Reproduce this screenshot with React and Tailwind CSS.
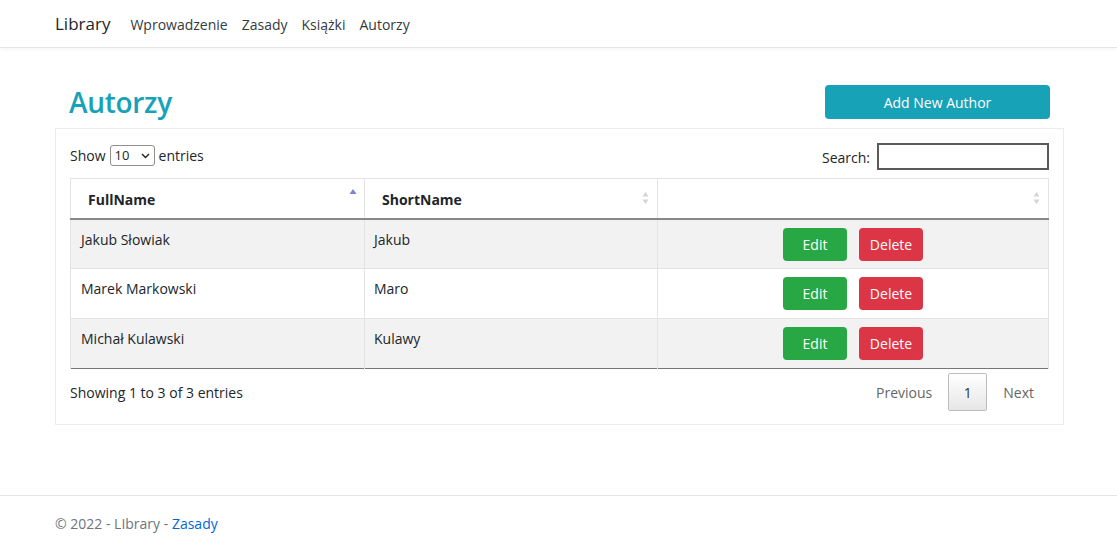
const authors = [
  { full: "Jakub Słowiak", short: "Jakub" },
  { full: "Marek Markowski", short: "Maro" },
  { full: "Michał Kulawski", short: "Kulawy" },
];

function SortBoth() {
  return (
    <svg width="7" height="14" viewBox="0 0 7 14" className="shrink-0">
      <path d="M3.5 1 L6.5 5.5 H0.5 Z" fill="#d4d4d4" />
      <path d="M3.5 13 L6.5 8.5 H0.5 Z" fill="#d4d4d4" />
    </svg>
  );
}

function SortUp() {
  return (
    <svg width="8" height="14" viewBox="0 0 8 14" className="shrink-0">
      <path d="M4 1 L7.5 6 H0.5 Z" fill="#7a82dc" />
    </svg>
  );
}

export default function App() {
  return (
    <div className="h-[543px] overflow-hidden flex flex-col bg-white text-[#212529] font-['Open_Sans','Noto_Sans',sans-serif] text-[14px]">
      <nav className="h-12 shrink-0 flex items-center px-[55px] border-b border-[#e5e5e5] shadow-[0_1px_4px_rgba(0,0,0,0.05)]">
        <span className="text-[17px] text-[#212529] mr-[20px] mt-[1px]">Library</span>
        <div className="flex gap-[14px] text-[14px] text-[#343a40] mt-[1px]">
          <span>Wprowadzenie</span>
          <span>Zasady</span>
          <span>Książki</span>
          <span>Autorzy</span>
        </div>
      </nav>

      <main className="flex-1 px-[55px] pt-[37px]">
        <div className="w-[1009px]">
          <div className="flex items-center justify-between pl-[14px] pr-[14px]">
            <h1 className="text-[28px] leading-[34px] font-semibold text-[#17a2b8] tracking-[-0.3px]">Autorzy</h1>
            <button className="w-[225px] h-[34px] rounded bg-[#17a2b8] text-white text-[14px]">
              Add New Author
            </button>
          </div>

          <div className="mt-[9px] border border-[#ececec] px-[14px] pt-[14px] pb-[13px]">
            <div className="flex justify-between items-end">
              <div className="flex items-center gap-1 mb-[4px]">
                <span>Show</span>
                <div className="flex items-center justify-between w-[45px] h-[21px] border border-[#8f8f8f] rounded-[3px] px-[4px] text-[13px]">
                  <span>10</span>
                  <svg width="9" height="6" viewBox="0 0 9 6">
                    <path d="M1 1 L4.5 4.5 L8 1" stroke="#222" strokeWidth="1.4" fill="none" />
                  </svg>
                </div>
                <span>entries</span>
              </div>
              <div className="flex items-center gap-[7px]">
                <span className="mt-[2px]">Search:</span>
                <div className="w-[172px] h-[27px] border-2 border-[#5a5a5a]" />
              </div>
            </div>

            <table className="mt-[8px] w-[979px] border-collapse table-fixed">
              <colgroup>
                <col className="w-[294px]" />
                <col className="w-[293px]" />
                <col />
              </colgroup>
              <thead>
                <tr className="h-[40px] border-b-2 border-[#888]">
                  <th className="border border-b-0 border-[#e3e3e3] pl-[17px] pr-[7px] pt-[3px] text-left font-bold">
                    <div className="flex items-center justify-between">
                      <span>FullName</span>
                      <span className="-mt-[9px]"><SortUp /></span>
                    </div>
                  </th>
                  <th className="border border-b-0 border-[#e3e3e3] pl-[17px] pr-[8px] pt-[3px] text-left font-bold">
                    <div className="flex items-center justify-between">
                      <span>ShortName</span>
                      <span className="-mt-[3px]"><SortBoth /></span>
                    </div>
                  </th>
                  <th className="border border-b-0 border-[#e3e3e3] pr-[8px]">
                    <div className="flex items-center justify-end">
                      <SortBoth />
                    </div>
                  </th>
                </tr>
              </thead>
              <tbody>
                {authors.map((a, i) => (
                  <tr
                    key={a.full}
                    className={
                      (i % 2 === 0 ? "bg-[#f2f2f2] " : "bg-white ") +
                      "h-[50px] " +
                      (i === authors.length - 1 ? "border-b border-[#777]" : "border-b border-[#e3e3e3]")
                    }
                  >
                    <td className="border-x border-[#e3e3e3] pl-[10px] align-top pt-[9px]">{a.full}</td>
                    <td className="border-x border-[#e3e3e3] pl-[9px] align-top pt-[9px]">{a.short}</td>
                    <td className="border-x border-[#e3e3e3] align-top pt-[8px]">
                      <div className="flex justify-center gap-[12px]">
                        <button className="w-[64px] h-[33px] rounded bg-[#28a745] text-white">Edit</button>
                        <button className="w-[64px] h-[33px] rounded bg-[#dc3545] text-white">Delete</button>
                      </div>
                    </td>
                  </tr>
                ))}
              </tbody>
            </table>

            <div className="flex items-center justify-between mt-[4px]">
              <span>Showing 1 to 3 of 3 entries</span>
              <div className="flex items-center text-[#666]">
                <span className="px-[16px]">Previous</span>
                <span className="w-[39px] h-[38px] flex items-center justify-center border border-[#bdbdbd] rounded-[2px] bg-gradient-to-b from-white to-[#e6e6e6] text-[#333]">
                  1
                </span>
                <span className="pl-[16px] pr-[15px]">Next</span>
              </div>
            </div>
          </div>
        </div>
      </main>

      <footer className="h-[48px] shrink-0 border-t border-[#e5e5e5] px-[55px] leading-[56px] text-[#6c757d] text-[14px] whitespace-nowrap">
        © 2022 - LIbrary - <span className="text-[#0366d6]">Zasady</span>
      </footer>
    </div>
  );
}
